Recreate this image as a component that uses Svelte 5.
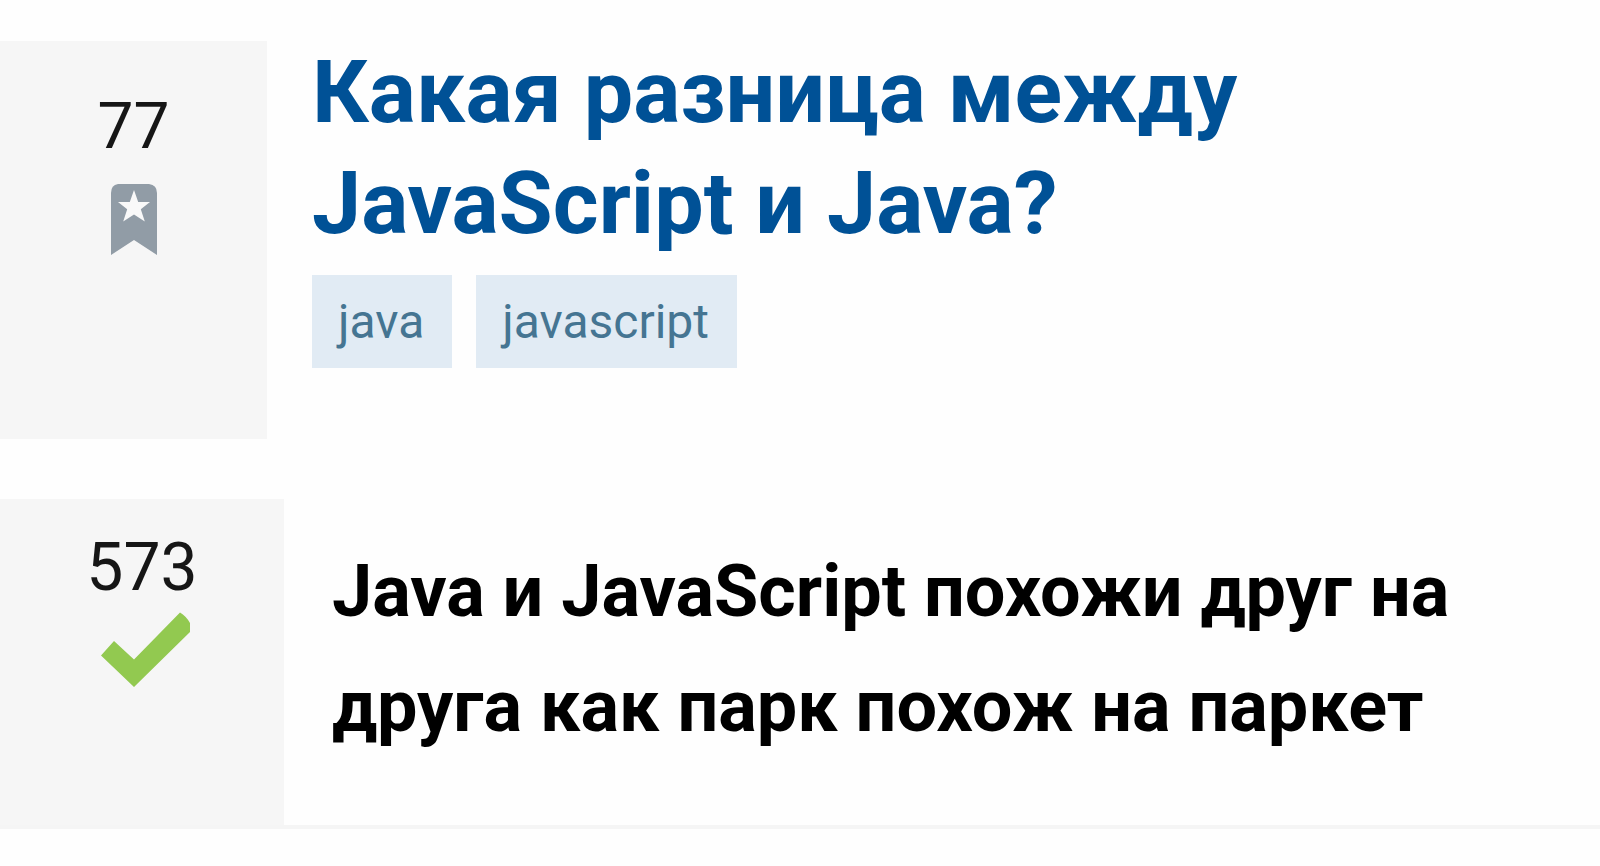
<script>
  const question = {
    votes: 77,
    title: ['Какая разница между', 'JavaScript и Java?'],
    tags: ['java', 'javascript'],
  };
  const answer = {
    votes: 573,
    text: ['Java и JavaScript похожи друг на', 'друга как парк похож на паркет'],
  };
</script>

<main>
  <article class="question">
    <aside>
      <span class="votes">{question.votes}</span>
      <svg width="48" height="72" viewBox="0 0 48 72" aria-hidden="true">
        <path
          fill="#919ca6"
          d="M8 0H39Q47 1 47 9V71L24 56L1 71V9Q1 1 8 0Z"
        />
        <path
          fill="#f9f9f9"
          d="M24 6L28.2 18H40L30.8 25.2L34.8 37.5L24 30.4L13.2 37.5L17.2 25.2L8 18H19.8Z"
        />
      </svg>
    </aside>
    <div class="content">
      <h1>{question.title[0]}<br />{question.title[1]}</h1>
      <ul>
        {#each question.tags as tag}
          <li><a href="#{tag}">{tag}</a></li>
        {/each}
      </ul>
    </div>
  </article>

  <article class="answer">
    <aside>
      <span class="votes">{answer.votes}</span>
      <svg width="98" height="76" viewBox="0 0 98 76" aria-hidden="true">
        <path fill="#92c950" d="M8 43.5L21 29L41 47.5L87 0.5Q93 4 97 11V20L41 75Z" />
      </svg>
    </aside>
    <p>{answer.text[0]}<br />{answer.text[1]}</p>
  </article>
</main>

<style>
  :global(body) {
    margin: 0;
    background: #fefefe;
  }

  main {
    padding-top: 36px;
    font-family: Roboto, sans-serif;
  }

  article {
    display: flex;
  }

  aside {
    display: flex;
    flex-direction: column;
    align-items: center;
    flex-shrink: 0;
    box-sizing: border-box;
    background: #f6f6f6;
    color: #161616;
  }

  .question {
    margin-bottom: 60px;
  }

  .question aside {
    width: 267px;
    margin-top: 5px;
    padding: 54px 0 183px;
    gap: 25px;
  }

  .votes {
    font-size: 64px;
    line-height: 64px;
  }

  .content {
    padding-left: 45px;
  }

  h1 {
    margin: 0 0 17px;
    font-size: 88px;
    line-height: 111px;
    font-weight: 700;
    color: #005196;
  }

  ul {
    display: flex;
    gap: 24px;
    margin: 0;
    padding: 0;
    list-style: none;
  }

  a {
    display: block;
    padding: 0 28px 0 26px;
    background: #e1ebf4;
    color: #457592;
    font-size: 48px;
    line-height: 93px;
    text-decoration: none;
  }

  .answer {
    border-bottom: 4px solid #f5f5f5;
  }

  .answer aside {
    width: 284px;
    padding: 36px 0 137px;
    gap: 11px;
  }

  .answer .votes {
    font-size: 66px;
    line-height: 66px;
  }

  p {
    margin: 0;
    padding: 35px 0 0 48px;
    font-size: 72px;
    line-height: 115px;
    font-weight: 700;
    color: #000;
  }
</style>
